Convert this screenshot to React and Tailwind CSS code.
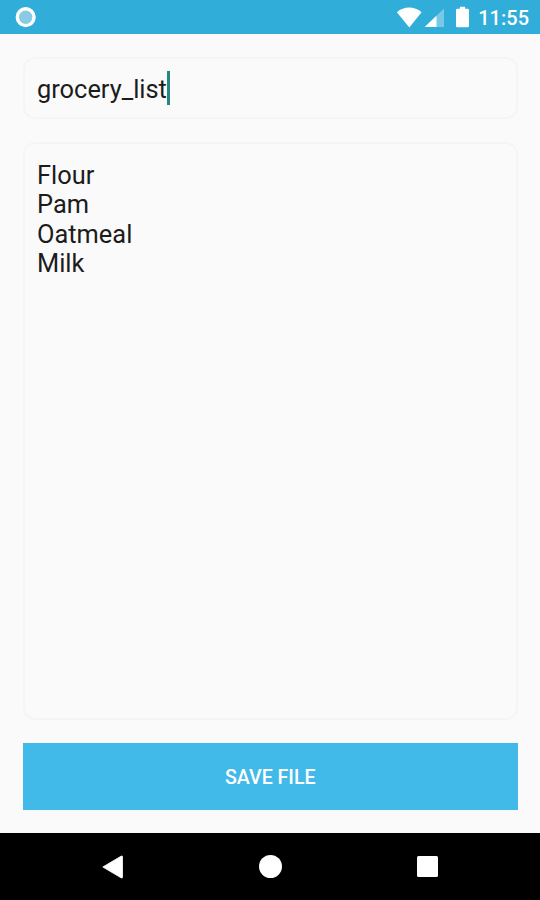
const items = ["Flour", "Pam", "Oatmeal", "Milk"];

function StatusBar() {
    return (
        <header className="flex h-[34px] shrink-0 items-center justify-between bg-[#30add9] pl-[15px] pr-[11px]">
            <svg width="22" height="22" viewBox="0 0 22 22">
                <circle cx="10.7" cy="11.2" r="8.4" fill="#89cbe5" stroke="#fff" strokeWidth="3.4" />
            </svg>
            <div className="flex items-center">
                <svg width="76" height="34" viewBox="0 0 76 34" fill="#fff">
                    {/* wifi */}
                    <path d="M1.9 12.2C8.8 6 19.5 6 26.6 12.2L14.3 27.4Z" />
                    {/* signal */}
                    <path d="M49 8.5V27H29.7Z" fillOpacity=".35" />
                    <path d="M41.5 15.7V27H29.7Z" />
                    {/* battery */}
                    <path d="M64.9 6.7h5.2v2h2.6q1.3 0 1.3 1.3v16q0 1.3-1.3 1.3H62.3q-1.3 0-1.3-1.3V10q0-1.3 1.3-1.3h2.6Z" />
                </svg>
                <span className="ml-[7px] mt-[2px] text-[20px] leading-none font-medium text-white">11:55</span>
            </div>
        </header>
    );
}

function NavBar() {
    return (
        <nav className="flex h-[67px] shrink-0 items-center justify-between bg-black pl-[100px] pr-[102px]">
            <svg width="24" height="26" viewBox="0 0 24 26">
                <path d="M2.8 13 21.3 2.1q1.2-.5 1.2.8v20.2q0 1.3-1.2.8Z" fill="#fff" stroke="#fff" strokeWidth=".8" strokeLinejoin="round" />
            </svg>
            <div className="size-[23px] rounded-full bg-white" />
            <div className="size-[21px] rounded-[1.5px] bg-white" />
        </nav>
    );
}

function App() {
    return (
        <div className="flex h-[900px] w-[540px] flex-col overflow-hidden bg-[#fafafa] font-['Roboto',sans-serif]">
            <StatusBar />
            <main className="flex flex-1 flex-col pt-[23px] pr-[22.5px] pb-[23px] pl-[23px]">
                <div className="flex h-[62px] items-center rounded-[12px] border-2 border-[#f5f5f5] pl-[12px] text-[25.4px] leading-[29.5px] text-[#1c1c1c]">
                    <span className="mt-[3px]">grocery_list</span>
                    <span className="h-[34px] w-[3px] bg-[#26897f]" />
                </div>
                <div className="mt-[23px] flex-1 rounded-[12px] border-2 border-[#f5f5f5] pt-[16.5px] pl-[12px] text-[25.4px] leading-[29.5px] text-[#1c1c1c]">
                    {items.map((item) => (
                        <p key={item}>{item}</p>
                    ))}
                </div>
                <button className="mt-[23px] h-[67px] shrink-0 bg-[#41baea] pt-[2px] text-[19.6px] font-medium text-white">
                    SAVE FILE
                </button>
            </main>
            <NavBar />
        </div>
    );
}

export default App;
